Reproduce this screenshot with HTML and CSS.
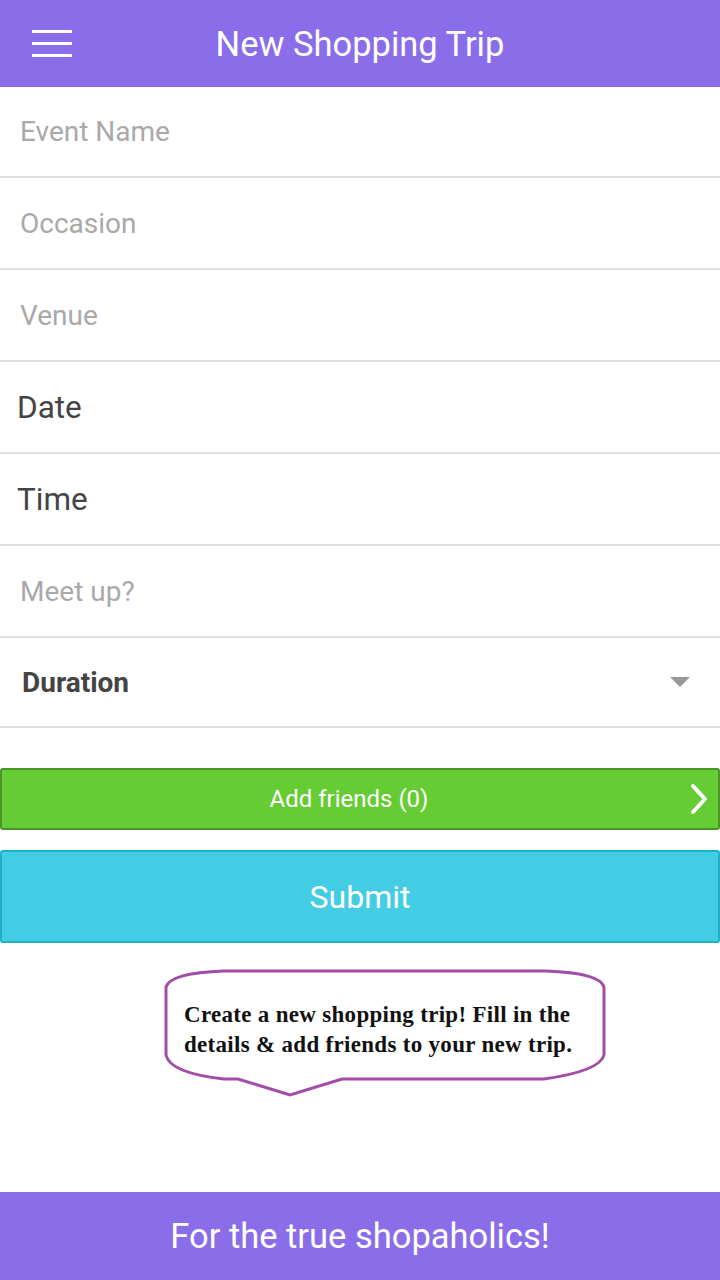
FILE: index.html
```html
<!DOCTYPE html>
<html>
<head>
<meta charset="utf-8">
<link rel="stylesheet" href="styles.css">
</head>
<body>
<div class="app">
  <header class="topbar">
    <div class="menu"><span></span><span></span><span></span></div>
    <h1 class="title">New Shopping Trip</h1>
  </header>
  <div class="form">
    <div class="row"><span class="ph">Event Name</span></div>
    <div class="row"><span class="ph">Occasion</span></div>
    <div class="row"><span class="ph">Venue</span></div>
    <div class="row"><span class="val">Date</span></div>
    <div class="row"><span class="val">Time</span></div>
    <div class="row"><span class="ph">Meet up?</span></div>
    <div class="row select"><span class="bold">Duration</span><span class="caret"></span></div>
  </div>
  <div class="btn green"><span>Add friends (0)</span>
    <svg class="chev" width="20" height="32" viewBox="0 0 20 32"><path d="M3 3 L15 16 L3 29" fill="none" stroke="#fff" stroke-width="4" stroke-linecap="round" stroke-linejoin="round"/></svg>
  </div>
  <div class="btn blue">Submit</div>
  <div class="bubble-wrap">
    <div class="bubble">
      <svg class="bubble-bg" width="444" height="128" viewBox="0 0 444 128">
        <path d="M60 2 L382 2 Q436 4 440 18 L440 86 Q436 102 380 110 L178 110 L126 126 L74 110 L60 110 Q6 104 2 86 L2 18 Q6 4 60 2 Z" fill="#fff" stroke="#a24ba8" stroke-width="3"/>
      </svg>
      <p class="bubble-text">Create a new shopping trip! Fill in the details &amp; add friends to your new trip.</p>
    </div>
  </div>
  <footer class="footer">For the true shopaholics!</footer>
</div>
</body>
</html>
```
FILE: styles.css
```css
* { box-sizing: border-box; }
html, body { margin: 0; padding: 0; }
body { width: 720px; height: 1280px; background: #fff; font-family: Roboto, "Noto Sans", sans-serif; }
.app { display: flex; flex-direction: column; height: 1280px; }
.topbar { height: 87px; background: #8a6de9; display: flex; align-items: center; position: relative; }
.menu { position: absolute; left: 32px; top: 30px; display: flex; flex-direction: column; gap: 9px; }
.menu span { display: block; width: 40px; height: 3px; background: #fff; }
.title { margin: 0; padding-top: 2px; width: 100%; text-align: center; color: #fff; font-weight: 400; font-size: 34.5px; line-height: 1; }
.form { display: flex; flex-direction: column; }
.row { height: 92px; border-bottom: 2px solid #dddddd; display: flex; align-items: center; padding-left: 20px; }
.row:first-child { height: 91px; }
.ph { color: #a9a9a9; font-size: 28px; }
.val { color: #444; font-size: 31.5px; margin-left: -3px; }
.select { height: 90px; padding-left: 22px; padding-right: 30px; justify-content: space-between; }
.bold { color: #444; font-weight: 700; font-size: 28px; }
.caret { width: 0; height: 0; border-left: 10px solid transparent; border-right: 10px solid transparent; border-top: 10px solid #999; }
.btn { display: flex; align-items: center; justify-content: center; color: #fff; position: relative; border-radius: 3px; }
.green { margin-top: 40px; height: 62px; background: #66cc33; border: 2px solid #4a9528; font-size: 24px; padding-right: 22px; }
.chev { position: absolute; right: 8px; top: 13px; }
.blue { margin-top: 20px; height: 93px; background: #42cde4; border: 2px solid #1eb1c9; font-size: 32px; }
.bubble-wrap { display: flex; padding-left: 164px; margin-top: 26px; }
.bubble { position: relative; width: 444px; height: 128px; }
.bubble-bg { position: absolute; left: 0; top: 0; }
.bubble-text { position: relative; margin: 0; padding: 31px 10px 0 20px; font-family: "Liberation Serif", "DejaVu Serif", serif; font-weight: 700; font-size: 23px; line-height: 30px; letter-spacing: 0.3px; color: #111; }
.footer { margin-top: auto; height: 88px; background: #8a6de9; color: #fff; font-size: 34.5px; display: flex; align-items: center; justify-content: center; }
```
